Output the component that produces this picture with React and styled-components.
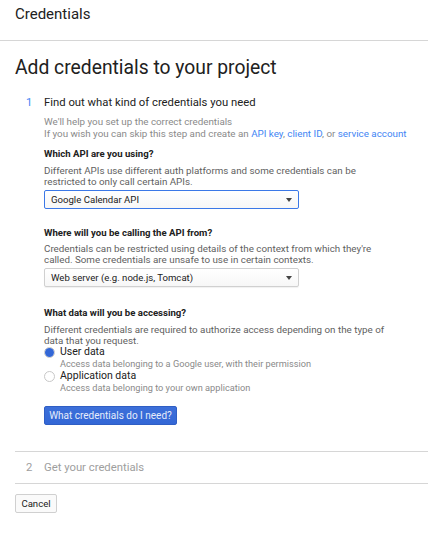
import React from "react";
import styled, { createGlobalStyle } from "styled-components";

const Global = createGlobalStyle`
  html, body { margin: 0; padding: 0; background: #fff; }
  body { font-family: Roboto, "Noto Sans", Arial, sans-serif; color: #212121; }
  * { box-sizing: border-box; }
`;

const Header = styled.header`
  height: 41px;
  line-height: 28px;
  padding: 0 15px;
  font-size: 15px;
  color: #212121;
  border-bottom: 1px solid #d6d6d6;
`;

const Title = styled.h1`
  margin: 15px 0 0 15px;
  font-size: 19.3px;
  font-weight: 400;
  line-height: 24px;
  color: #212121;
`;

const Steps = styled.div`
  margin: 14px 0 0 15px;
`;

const Step = styled.section`
  padding-bottom: ${(p) => (p.$open ? "26px" : "0")};
  border-bottom: ${(p) => (p.$last ? "1px solid #d6d6d6" : "none")};
  & + & {
    border-top: 1px solid #d6d6d6;
  }
`;

const StepHead = styled.div`
  display: flex;
  align-items: center;
  height: ${(p) => (p.$open ? "16px" : "31px")};
  padding-left: 11px;
  font-size: 11.3px;
  color: ${(p) => (p.$open ? "#212121" : "#9e9e9e")};
`;

const StepNum = styled.span`
  width: 18px;
  color: ${(p) => (p.$open ? "#4285f4" : "#9e9e9e")};
`;

const StepBody = styled.div`
  padding-left: 29px;
`;

const Intro = styled.p`
  margin: 6px 0 0;
  font-size: 9.8px;
  line-height: 12px;
  color: #8a8a8a;
`;

const Link = styled.a`
  color: #4285f4;
  text-decoration: none;
`;

const Field = styled.div`
  margin-top: ${(p) => p.$mt}px;
`;

const Label = styled.div`
  font-size: 9.6px;
  font-weight: 700;
  line-height: 12px;
  color: #212121;
`;

const Desc = styled.p`
  margin: 4.5px 0 0;
  width: 345px;
  font-size: 9.8px;
  line-height: 11px;
  color: #5f5f5f;
`;

const Select = styled.div`
  position: relative;
  margin-top: 3px;
  width: 255px;
  height: 19px;
  padding-left: 6px;
  display: flex;
  align-items: center;
  font-size: 9.6px;
  color: #212121;
  background: linear-gradient(#ffffff, #f7f7f7);
  border: 1px solid ${(p) => (p.$focus ? "#3b78e7" : "#d0d0d0")};
  border-radius: 2px;
  box-shadow: ${(p) => (p.$focus ? "none" : "0 1px 1px rgba(0,0,0,0.06)")};
`;

const Caret = styled.span`
  position: absolute;
  right: 6px;
  top: 7px;
  width: 0;
  height: 0;
  border-left: 3.5px solid transparent;
  border-right: 3.5px solid transparent;
  border-top: 4px solid #444;
`;

const Options = styled.div`
  margin-top: 0;
`;

const Option = styled.label`
  display: grid;
  grid-template-columns: 16px 1fr;
`;

const Radio = styled.span`
  width: 11px;
  height: 11px;
  margin-top: 1px;
  border-radius: 50%;
  border: 1px solid #c8c8c8;
  background: #fff;
  display: flex;
  align-items: center;
  justify-content: center;
  &::after {
    content: "";
    display: ${(p) => (p.$checked ? "block" : "none")};
    width: 9px;
    height: 9px;
    border-radius: 50%;
    background: #3367d6;
  }
`;

const OptText = styled.div`
  display: flex;
  flex-direction: column;
`;

const OptLabel = styled.span`
  font-size: 10.5px;
  line-height: 12px;
  color: #212121;
`;

const OptSub = styled.span`
  font-size: 9.2px;
  line-height: 12px;
  color: #8a8a8a;
`;

const Primary = styled.button`
  display: block;
  margin-top: 12px;
  width: 133px;
  height: 19px;
  padding: 0;
  font-family: inherit;
  font-size: 10px;
  color: #e6edfb;
  background: linear-gradient(#3c6fd9, #3367d6);
  border: 1px solid #2f5ec4;
  border-radius: 2px;
`;

const Cancel = styled.button`
  display: block;
  margin: 10px 0 0 15px;
  width: 42px;
  height: 19px;
  padding: 0;
  font-family: inherit;
  font-size: 9.6px;
  color: #212121;
  background: #fafafa;
  border: 1px solid #d0d0d0;
  border-radius: 2px;
`;

export default function App() {
  return (
    <>
      <Global />
      <Header>Credentials</Header>
      <Title>Add credentials to your project</Title>
      <Steps>
        <Step $open>
          <StepHead $open>
            <StepNum $open>1</StepNum>
            Find out what kind of credentials you need
          </StepHead>
          <StepBody>
            <Intro>
              We'll help you set up the correct credentials
              <br />
              If you wish you can skip this step and create an{" "}
              <Link>API key</Link>, <Link>client ID</Link>, or{" "}
              <Link>service account</Link>
            </Intro>
            <Field $mt={8}>
              <Label>Which API are you using?</Label>
              <Desc>
                Different APIs use different auth platforms and some credentials can be
                restricted to only call certain APIs.
              </Desc>
              <Select $focus>
                Google Calendar API
                <Caret />
              </Select>
            </Field>
            <Field $mt={18}>
              <Label>Where will you be calling the API from?</Label>
              <Desc>
                Credentials can be restricted using details of the context from which they're
                called. Some credentials are unsafe to use in certain contexts.
              </Desc>
              <Select>
                Web server (e.g. node.js, Tomcat)
                <Caret />
              </Select>
            </Field>
            <Field $mt={20}>
              <Label>What data will you be accessing?</Label>
              <Desc>
                Different credentials are required to authorize access depending on the type of
                data that you request.
              </Desc>
              <Options>
                <Option>
                  <Radio $checked />
                  <OptText>
                    <OptLabel>User data</OptLabel>
                    <OptSub>Access data belonging to a Google user, with their permission</OptSub>
                  </OptText>
                </Option>
                <Option>
                  <Radio />
                  <OptText>
                    <OptLabel>Application data</OptLabel>
                    <OptSub>Access data belonging to your own application</OptSub>
                  </OptText>
                </Option>
              </Options>
            </Field>
            <Primary>What credentials do I need?</Primary>
          </StepBody>
        </Step>
        <Step $last>
          <StepHead>
            <StepNum>2</StepNum>
            Get your credentials
          </StepHead>
        </Step>
      </Steps>
      <Cancel>Cancel</Cancel>
    </>
  );
}
